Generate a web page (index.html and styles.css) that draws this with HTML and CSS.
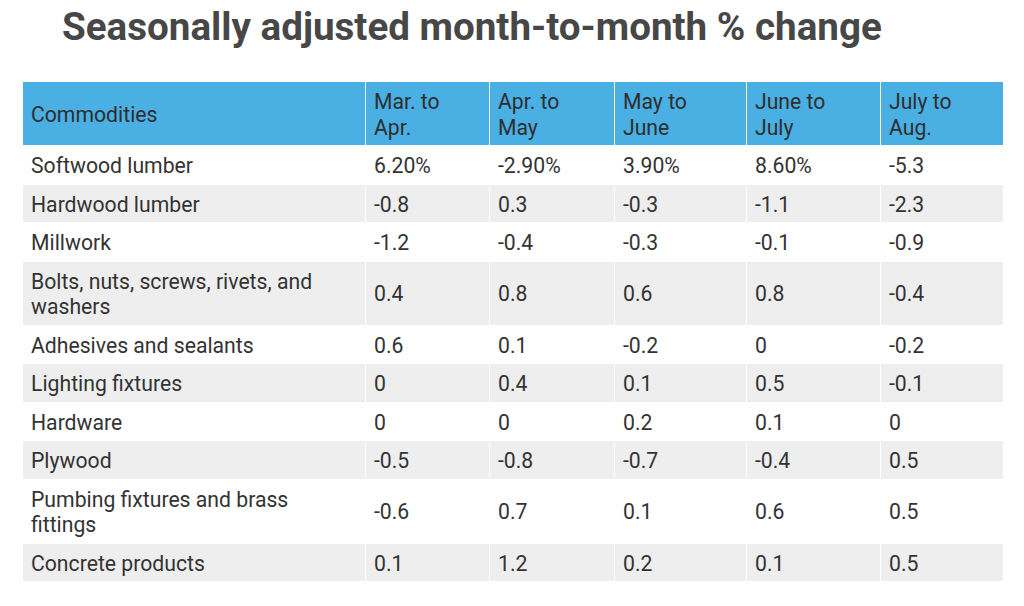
FILE: index.html
```html
<!DOCTYPE html>
<html>
<head>
<meta charset="utf-8">
<link rel="stylesheet" href="styles.css">
</head>
<body>
<h1 class="title">Seasonally adjusted month-to-month % change</h1>
<table class="data">
  <colgroup>
    <col class="c-name">
    <col class="c-a">
    <col class="c-b">
    <col class="c-c">
    <col class="c-d">
    <col class="c-e">
  </colgroup>
  <thead>
    <tr><th>Commodities</th><th>Mar. to Apr.</th><th>Apr. to May</th><th>May to June</th><th>June to July</th><th>July to Aug.</th></tr>
  </thead>
  <tbody>
    <tr><td>Softwood lumber</td><td>6.20%</td><td>-2.90%</td><td>3.90%</td><td>8.60%</td><td>-5.3</td></tr>
    <tr><td>Hardwood lumber</td><td>-0.8</td><td>0.3</td><td>-0.3</td><td>-1.1</td><td>-2.3</td></tr>
    <tr><td>Millwork</td><td>-1.2</td><td>-0.4</td><td>-0.3</td><td>-0.1</td><td>-0.9</td></tr>
    <tr><td>Bolts, nuts, screws, rivets, and washers</td><td>0.4</td><td>0.8</td><td>0.6</td><td>0.8</td><td>-0.4</td></tr>
    <tr><td>Adhesives and sealants</td><td>0.6</td><td>0.1</td><td>-0.2</td><td>0</td><td>-0.2</td></tr>
    <tr><td>Lighting fixtures</td><td>0</td><td>0.4</td><td>0.1</td><td>0.5</td><td>-0.1</td></tr>
    <tr><td>Hardware</td><td>0</td><td>0</td><td>0.2</td><td>0.1</td><td>0</td></tr>
    <tr><td>Plywood</td><td>-0.5</td><td>-0.8</td><td>-0.7</td><td>-0.4</td><td>0.5</td></tr>
    <tr><td>Pumbing fixtures and brass fittings</td><td>-0.6</td><td>0.7</td><td>0.1</td><td>0.6</td><td>0.5</td></tr>
    <tr><td>Concrete products</td><td>0.1</td><td>1.2</td><td>0.2</td><td>0.1</td><td>0.5</td></tr>
  </tbody>
</table>
</body>
</html>
```
FILE: styles.css
```css
html, body {
  margin: 0;
  padding: 0;
  background: #ffffff;
}
body {
  font-family: Roboto, "Liberation Sans", sans-serif;
  color: #333333;
}
.title {
  margin: 4px 0 0 62px;
  font-size: 38.6px;
  line-height: 46px;
  font-weight: 700;
  color: #474747;
}
.data {
  margin: 31px 0 0 22px;
  width: 982px;
  table-layout: fixed;
  border-collapse: separate;
  border-spacing: 1px;
  font-size: 21.2px;
  line-height: 25.5px;
}
.c-name { width: 342px; }
.c-a { width: 123px; }
.c-b { width: 124px; }
.c-c { width: 131px; }
.c-d { width: 133px; }
.c-e { width: 122px; }
.data th,
.data td {
  padding: 7px 12px 5px 8px;
  text-align: left;
  vertical-align: middle;
}
.data th {
  background: #4aafe2;
  font-weight: 400;
  color: #2e2e2e;
}
.data tbody tr:nth-child(even) td {
  background: #eeeeee;
}
```
